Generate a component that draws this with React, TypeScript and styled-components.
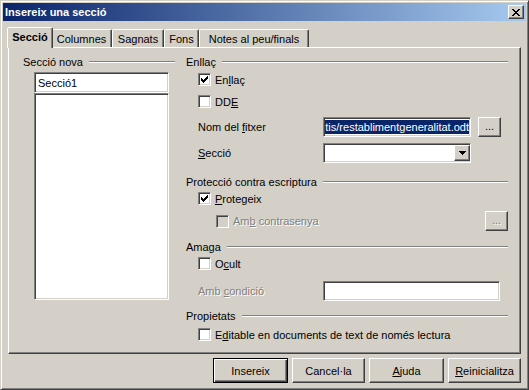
import React from 'react';
import styled, { createGlobalStyle, css } from 'styled-components';

const FONT = `Tahoma, "Liberation Sans", Arial, sans-serif`;
const FACE = '#d4d0c8';
const SHADOW = '#808080';
const DARK = '#404040';

const GlobalStyle = createGlobalStyle`
  html, body {
    margin: 0;
    padding: 0;
    background: ${FACE};
  }
  body {
    font-family: ${FONT};
    font-size: 11px;
    color: #000;
  }
`;

const raised = css`
  border: 1px solid;
  border-color: #fff ${DARK} ${DARK} #fff;
  box-shadow: inset -1px -1px ${SHADOW}, inset 1px 1px ${FACE};
`;

const sunken = css`
  border: 1px solid;
  border-color: ${SHADOW} #fff #fff ${SHADOW};
  box-shadow: inset 1px 1px ${DARK}, inset -1px -1px ${FACE};
`;

const Window = styled.div`
  box-sizing: border-box;
  width: 529px;
  height: 390px;
  padding: 2px;
  border: 1px solid;
  border-color: ${FACE} ${DARK} ${DARK} ${FACE};
  box-shadow: inset 1px 1px #fff, inset -1px -1px ${SHADOW};
  display: flex;
  flex-direction: column;
  background: ${FACE};
`;

const TitleBar = styled.div`
  height: 18px;
  display: flex;
  align-items: center;
  justify-content: space-between;
  padding: 0 2px;
  background: linear-gradient(to right, #0a246a, #a6caf0);
`;

const Title = styled.span`
  color: #fff;
  font-weight: bold;
  font-size: 11px;
`;

const CloseButton = styled.div`
  box-sizing: border-box;
  width: 16px;
  height: 14px;
  background: ${FACE};
  ${raised};
  display: flex;
  align-items: center;
  justify-content: center;
`;

const Body = styled.div`
  display: flex;
  flex-direction: column;
  padding: 6px 5px 0 5px;
`;

const TabStrip = styled.div`
  display: flex;
  align-items: flex-end;
  height: 21px;
  padding-left: 1px;
  position: relative;
  z-index: 1;
  margin-bottom: -1px;
`;

const Tab = styled.div<{ $active?: boolean; $w: number }>`
  box-sizing: border-box;
  width: ${(p) => p.$w + (p.$active ? 4 : 0)}px;
  height: ${(p) => (p.$active ? 21 : 18)}px;
  margin: 0 ${(p) => (p.$active ? -2 : 0)}px ${(p) => (p.$active ? 0 : 1)}px;
  padding-bottom: ${(p) => (p.$active ? 2 : 0)}px;
  display: flex;
  align-items: center;
  justify-content: center;
  font-weight: ${(p) => (p.$active ? 'bold' : 'normal')};
  background: ${FACE};
  border: 1px solid;
  border-bottom: none;
  border-color: #fff ${DARK} transparent #fff;
  border-radius: 2px 2px 0 0;
  box-shadow: inset -1px 0 ${SHADOW};
  position: relative;
  z-index: ${(p) => (p.$active ? 2 : 0)};
  white-space: nowrap;
`;

const Panel = styled.div`
  box-sizing: border-box;
  width: 513px;
  height: 307px;
  border: 1px solid;
  border-color: #fff ${DARK} ${DARK} #fff;
  box-shadow: inset -1px -1px ${SHADOW};
  display: grid;
  grid-template-columns: 152px 1fr;
  column-gap: 11px;
  padding: 7px 12px 0 14px;
`;

const Column = styled.div`
  display: flex;
  flex-direction: column;
`;

const Heading = styled.div<{ $gap?: number }>`
  height: 13px;
  display: flex;
  align-items: center;
  gap: 6px;
  margin-top: ${(p) => p.$gap ?? 0}px;
  white-space: nowrap;

  &::after {
    content: '';
    flex: 1;
    height: 0;
    border-top: 1px solid ${SHADOW};
    border-bottom: 1px solid #fff;
  }
`;

const SunkenBox = styled.div<{ $w: number; $h: number; $gap?: number }>`
  box-sizing: border-box;
  width: ${(p) => p.$w}px;
  height: ${(p) => p.$h}px;
  margin-top: ${(p) => p.$gap ?? 0}px;
  background: #fff;
  ${sunken};
  display: flex;
  align-items: center;
  overflow: hidden;
  white-space: nowrap;
`;

const NameText = styled.span`
  padding-left: 3px;
`;

const LeftBoxes = styled.div`
  display: flex;
  flex-direction: column;
  padding-left: 11px;
`;

const Row = styled.div<{ $gap: number; $indent?: number; $h?: number }>`
  display: flex;
  align-items: center;
  height: ${(p) => p.$h ?? 13}px;
  margin-top: ${(p) => p.$gap}px;
  padding-left: ${(p) => p.$indent ?? 12}px;
`;

const CheckBox = styled.span<{ $disabled?: boolean }>`
  box-sizing: border-box;
  width: 13px;
  height: 13px;
  background: ${(p) => (p.$disabled ? FACE : '#fff')};
  ${sunken};
  display: inline-flex;
  align-items: center;
  justify-content: center;
  margin-right: 4px;
  flex: none;
`;

const Label = styled.span<{ $disabled?: boolean }>`
  white-space: nowrap;
  ${(p) =>
    p.$disabled &&
    css`
      color: ${SHADOW};
      text-shadow: 1px 1px #fff;
    `}
`;

const Acc = styled.span`
  text-decoration: underline;
`;

const FieldLabel = styled(Label)`
  width: 125px;
  flex: none;
`;

const Spacer = styled.div`
  flex: 1;
`;

const FileText = styled.div`
  flex: 1;
  display: flex;
  justify-content: flex-end;
  overflow: hidden;
  padding-right: 1px;
`;

const Selected = styled.span`
  background: #0a246a;
  color: #fff;
  line-height: 14px;
`;

const SmallButton = styled.div<{ $disabled?: boolean }>`
  box-sizing: border-box;
  width: 23px;
  height: 20px;
  margin-left: 7px;
  background: ${FACE};
  ${raised};
  display: flex;
  align-items: center;
  justify-content: center;
  padding-bottom: 3px;
  color: ${(p) => (p.$disabled ? SHADOW : '#000')};
  text-shadow: ${(p) => (p.$disabled ? '1px 1px #fff' : 'none')};
`;

const DropButton = styled.div`
  box-sizing: border-box;
  width: 16px;
  height: 16px;
  margin-left: auto;
  background: ${FACE};
  ${raised};
  display: flex;
  align-items: center;
  justify-content: center;
`;

const ButtonBar = styled.div`
  display: flex;
  justify-content: flex-end;
  gap: 4px;
  padding-top: 4px;
`;

const PushButton = styled.div<{ $default?: boolean; $w: number }>`
  box-sizing: border-box;
  width: ${(p) => p.$w}px;
  height: 25px;
  background: ${FACE};
  display: flex;
  align-items: center;
  justify-content: center;
  ${(p) =>
    p.$default
      ? css`
          border: 1px solid #000;
          box-shadow: inset 1px 1px #fff, inset -1px -1px ${DARK}, inset -2px -2px ${SHADOW};
        `
      : raised}
`;

const Check = () => (
  <svg width="7" height="7" viewBox="0 0 7 7" shapeRendering="crispEdges">
    <path d="M0 2h1v3h-1zM1 3h1v3h-1zM2 4h1v3h-1zM3 3h1v3h-1zM4 2h1v3h-1zM5 1h1v3h-1zM6 0h1v3h-1z" fill="#000" />
  </svg>
);

const CloseX = () => (
  <svg width="8" height="7" viewBox="0 0 8 7" shapeRendering="crispEdges">
    <path
      d="M0 0h2v1h-2zM6 0h2v1h-2zM1 1h2v1h-2zM5 1h2v1h-2zM2 2h4v1h-4zM3 3h2v1h-2zM2 4h4v1h-4zM1 5h2v1h-2zM5 5h2v1h-2zM0 6h2v1h-2zM6 6h2v1h-2z"
      fill="#000"
    />
  </svg>
);

const DownArrow = () => (
  <svg width="7" height="4" viewBox="0 0 7 4" shapeRendering="crispEdges">
    <path d="M0 0h7v1h-7zM1 1h5v1h-5zM2 2h3v1h-3zM3 3h1v1h-1z" fill="#000" />
  </svg>
);

function CheckRow({
  gap,
  indent,
  checked,
  disabled,
  children,
  h,
  extra,
}: {
  gap: number;
  indent?: number;
  checked?: boolean;
  disabled?: boolean;
  children: React.ReactNode;
  h?: number;
  extra?: React.ReactNode;
}) {
  return (
    <Row $gap={gap} $indent={indent} $h={h}>
      <CheckBox $disabled={disabled}>{checked && <Check />}</CheckBox>
      <Label $disabled={disabled}>{children}</Label>
      {extra}
    </Row>
  );
}

export default function App() {
  return (
    <>
      <GlobalStyle />
      <Window>
        <TitleBar>
          <Title>Insereix una secció</Title>
          <CloseButton>
            <CloseX />
          </CloseButton>
        </TitleBar>
        <Body>
          <TabStrip>
            <Tab $active $w={42}>Secció</Tab>
            <Tab $w={61}>Columnes</Tab>
            <Tab $w={52}>Sagnats</Tab>
            <Tab $w={35}>Fons</Tab>
            <Tab $w={110}>Notes al peu/finals</Tab>
          </TabStrip>
          <Panel>
            <Column>
              <Heading>Secció nova</Heading>
              <LeftBoxes>
                <SunkenBox $w={135} $h={21} $gap={4}>
                  <NameText>Secció1</NameText>
                </SunkenBox>
                <SunkenBox $w={135} $h={207} />
              </LeftBoxes>
            </Column>
            <Column>
              <Heading>Enllaç</Heading>
              <CheckRow gap={5} checked>
                En<Acc>l</Acc>laç
              </CheckRow>
              <CheckRow gap={9}>
                DD<Acc>E</Acc>
              </CheckRow>
              <Row $gap={9} $h={20}>
                <FieldLabel>
                  Nom del <Acc>f</Acc>itxer
                </FieldLabel>
                <SunkenBox $w={148} $h={20}>
                  <FileText>
                    <Selected>tis/restablimentgeneralitat.odt</Selected>
                  </FileText>
                </SunkenBox>
                <SmallButton>...</SmallButton>
              </Row>
              <Row $gap={6} $h={20}>
                <FieldLabel>
                  <Acc>S</Acc>ecció
                </FieldLabel>
                <SunkenBox $w={148} $h={20}>
                  <DropButton>
                    <DownArrow />
                  </DropButton>
                </SunkenBox>
              </Row>
              <Heading $gap={12}>Protecció contra escriptura</Heading>
              <CheckRow gap={4} checked>
                <Acc>P</Acc>rotegeix
              </CheckRow>
              <CheckRow
                gap={6}
                h={20}
                indent={30}
                disabled
                extra={
                  <>
                    <Spacer />
                    <SmallButton $disabled>...</SmallButton>
                  </>
                }
              >
                Am<Acc>b</Acc> contrasenya
              </CheckRow>
              <Heading $gap={9}>Amaga</Heading>
              <CheckRow gap={4}>
                O<Acc>c</Acc>ult
              </CheckRow>
              <Row $gap={11} $h={20}>
                <FieldLabel $disabled>
                  Amb <Acc>c</Acc>ondició
                </FieldLabel>
                <SunkenBox $w={177} $h={20} />
              </Row>
              <Heading $gap={8}>Propietats</Heading>
              <CheckRow gap={6}>
                E<Acc>d</Acc>itable en documents de text de només lectura
              </CheckRow>
            </Column>
          </Panel>
          <ButtonBar>
            <PushButton $default $w={75}>
              Insereix
            </PushButton>
            <PushButton $w={73}>Cancel·la</PushButton>
            <PushButton $w={75}>
              <Acc>A</Acc>juda
            </PushButton>
            <PushButton $w={73}>
              <Acc>R</Acc>einicialitza
            </PushButton>
          </ButtonBar>
        </Body>
      </Window>
    </>
  );
}
